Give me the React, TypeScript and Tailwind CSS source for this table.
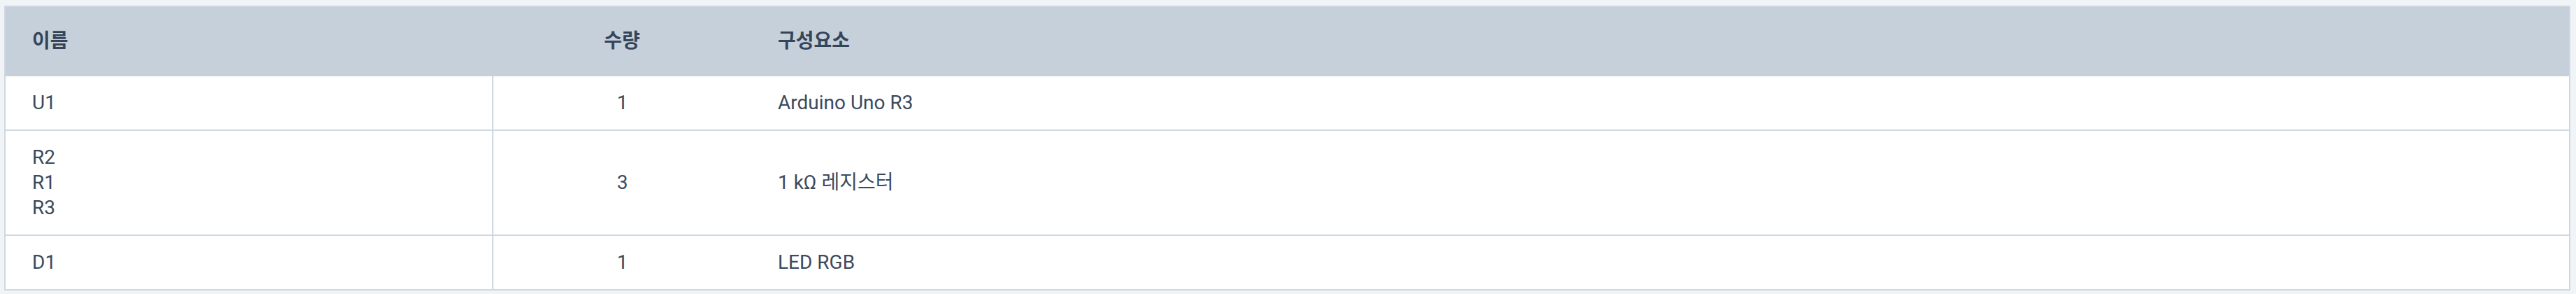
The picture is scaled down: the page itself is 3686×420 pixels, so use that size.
import React from "react";

const rows = [
  { name: ["U1"], qty: "1", comp: "Arduino Uno R3" },
  { name: ["R2", "R1", "R3"], qty: "3", comp: "1 kΩ 레지스터" },
  { name: ["D1"], qty: "1", comp: "LED RGB" },
];

export default function App() {
  return (
    <div
      className="w-[3686px] h-[420px] bg-[#f1f4f6] pl-[6px] pr-[8px] pt-[8px] text-[28px] leading-[36px] text-[#3b4a5d]"
      style={{ fontFamily: 'Roboto, "Noto Sans CJK KR", sans-serif' }}
    >
      <table className="w-full border-collapse border-2 border-[#cfd8e2] bg-white">
        <thead>
          <tr className="bg-[#c6d0db]">
            <th className="w-[698px] px-[38px] pt-[31px] pb-[32px] text-left font-semibold text-[#34455a]">이름</th>
            <th className="w-[370px] px-[38px] pt-[31px] pb-[32px] text-center font-semibold text-[#34455a]">수량</th>
            <th className="px-[38px] pt-[31px] pb-[32px] text-left font-semibold text-[#34455a]">구성요소</th>
          </tr>
        </thead>
        <tbody>
          {rows.map((r, i) => (
            <tr key={i} className="border-b-2 border-[#cfd8e2]">
              <td className="px-[38px] py-[20px] align-middle border-r-2 border-[#cfd8e2]">
                {r.name.map((n) => (
                  <div key={n}>{n}</div>
                ))}
              </td>
              <td className="px-[38px] py-[20px] text-center align-middle">{r.qty}</td>
              <td className="px-[38px] py-[20px] text-left align-middle">{r.comp}</td>
            </tr>
          ))}
        </tbody>
      </table>
    </div>
  );
}
